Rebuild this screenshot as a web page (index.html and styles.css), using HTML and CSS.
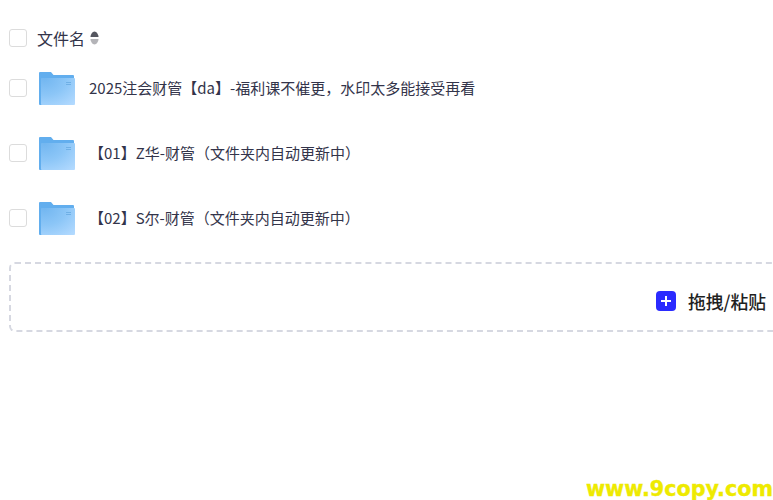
FILE: index.html
```html
<!DOCTYPE html>
<html lang="zh">
<head>
<meta charset="utf-8">
<title>文件名</title>
<link rel="stylesheet" href="styles.css">
</head>
<body>
<svg class="defs" width="0" height="0" aria-hidden="true">
  <defs>
    <radialGradient id="fg" cx="0.1" cy="0" r="1.3">
      <stop offset="0" stop-color="#72b6f0"/>
      <stop offset="0.5" stop-color="#8cc6f7"/>
      <stop offset="1" stop-color="#b3daff"/>
    </radialGradient>
  </defs>
</svg>
<main class="page">
  <div class="head">
    <span class="check"></span>
    <span class="head-label">文件名</span>
    <svg class="sort" width="9" height="14" viewBox="0 0 9 14"><path d="M4.500 0.500C6.500 0.500 8.500 3.500 8.500 6H0.500C0.500 3.500 2.500 0.500 4.500 0.500Z" fill="#55565f"/><path d="M4.500 13.500C6.500 13.500 8.500 10.500 8.500 8H0.500C0.500 10.500 2.500 13.500 4.500 13.500Z" fill="#b4b4b8"/></svg>
  </div>
  <div class="row">
    <span class="check"></span>
    <svg class="folder" width="36" height="34" viewBox="0 0 36 34"><path d="M0 2a1 1 0 0 1 1-1h11l2.500 3H34a1 1 0 0 1 1 1v29H1a1 1 0 0 1-1-1Z" fill="#62aeee"/><rect x="2" y="7" width="34" height="27" rx="1" fill="url(#fg)"/><path d="M27 11.500h5M27 13.500h5" stroke="#6fb0e6" stroke-width="1"/></svg>
    <span class="name">2025注会财管【da】-福利课不催更，水印太多能接受再看</span>
  </div>
  <div class="row">
    <span class="check"></span>
    <svg class="folder" width="36" height="34" viewBox="0 0 36 34"><path d="M0 2a1 1 0 0 1 1-1h11l2.500 3H34a1 1 0 0 1 1 1v29H1a1 1 0 0 1-1-1Z" fill="#62aeee"/><rect x="2" y="7" width="34" height="27" rx="1" fill="url(#fg)"/><path d="M27 11.500h5M27 13.500h5" stroke="#6fb0e6" stroke-width="1"/></svg>
    <span class="name">【01】Z华-财管（文件夹内自动更新中）</span>
  </div>
  <div class="row">
    <span class="check"></span>
    <svg class="folder" width="36" height="34" viewBox="0 0 36 34"><path d="M0 2a1 1 0 0 1 1-1h11l2.500 3H34a1 1 0 0 1 1 1v29H1a1 1 0 0 1-1-1Z" fill="#62aeee"/><rect x="2" y="7" width="34" height="27" rx="1" fill="url(#fg)"/><path d="M27 11.500h5M27 13.500h5" stroke="#6fb0e6" stroke-width="1"/></svg>
    <span class="name">【02】S尔-财管（文件夹内自动更新中）</span>
  </div>
  <div class="drop">
    <span class="plus"><svg width="20" height="20" viewBox="0 0 20 20"><path d="M10 5v10M5 10h10" stroke="#fff" stroke-width="2"/></svg></span>
    <span class="drop-label">拖拽/粘贴</span>
  </div>
</main>
<footer class="mark">www.9copy.com</footer>
</body>
</html>
```
FILE: styles.css
```css
* { box-sizing: border-box; }
html, body { margin: 0; padding: 0; }
body {
  width: 773px;
  height: 500px;
  overflow: hidden;
  position: relative;
  background: #fff;
  font-family: "Noto Sans CJK SC", "Noto Sans", sans-serif;
  color: #33344a;
}
.defs { position: absolute; }
.page { padding: 22px 0 0 9px; width: 773px; }
.head { display: flex; align-items: center; height: 31px; }
.check {
  width: 18px;
  height: 18px;
  flex: none;
  border: 1px solid #dcdcdc;
  border-radius: 3px;
  background: #fff;
}
.head-label { margin-left: 10px; font-size: 16px; line-height: 20px; color: #33344a; }
.sort { margin-left: 5px; }
.row { display: flex; align-items: center; height: 65px; }
.head + .row { margin-top: 2px; }
.folder { margin-left: 12px; flex: none; }
.name { margin-left: 14px; font-size: 15px; line-height: 20px; white-space: nowrap; }
.drop {
  margin-top: 12px;
  width: 790px;
  height: 70px;
  border: 2px dashed #d6d8e1;
  border-radius: 6px;
  display: flex;
  align-items: center;
  padding-left: 645px;
  padding-top: 7px;
}
.plus {
  width: 20px;
  height: 20px;
  flex: none;
  border-radius: 4px;
  background: #2b2bff;
  display: flex;
}
.drop-label { margin-left: 12px; font-size: 17.800px; font-weight: 500; line-height: 22px; color: #1f1f1f; white-space: nowrap; }
.mark {
  position: absolute;
  right: 0;
  bottom: 0;
  font-family: "DejaVu Sans", sans-serif;
  font-size: 20.700px;
  font-weight: 700;
  line-height: 22px;
  color: #eeea00;
  -webkit-text-stroke: 0.4px #eeea00;
  white-space: nowrap;
}
```
